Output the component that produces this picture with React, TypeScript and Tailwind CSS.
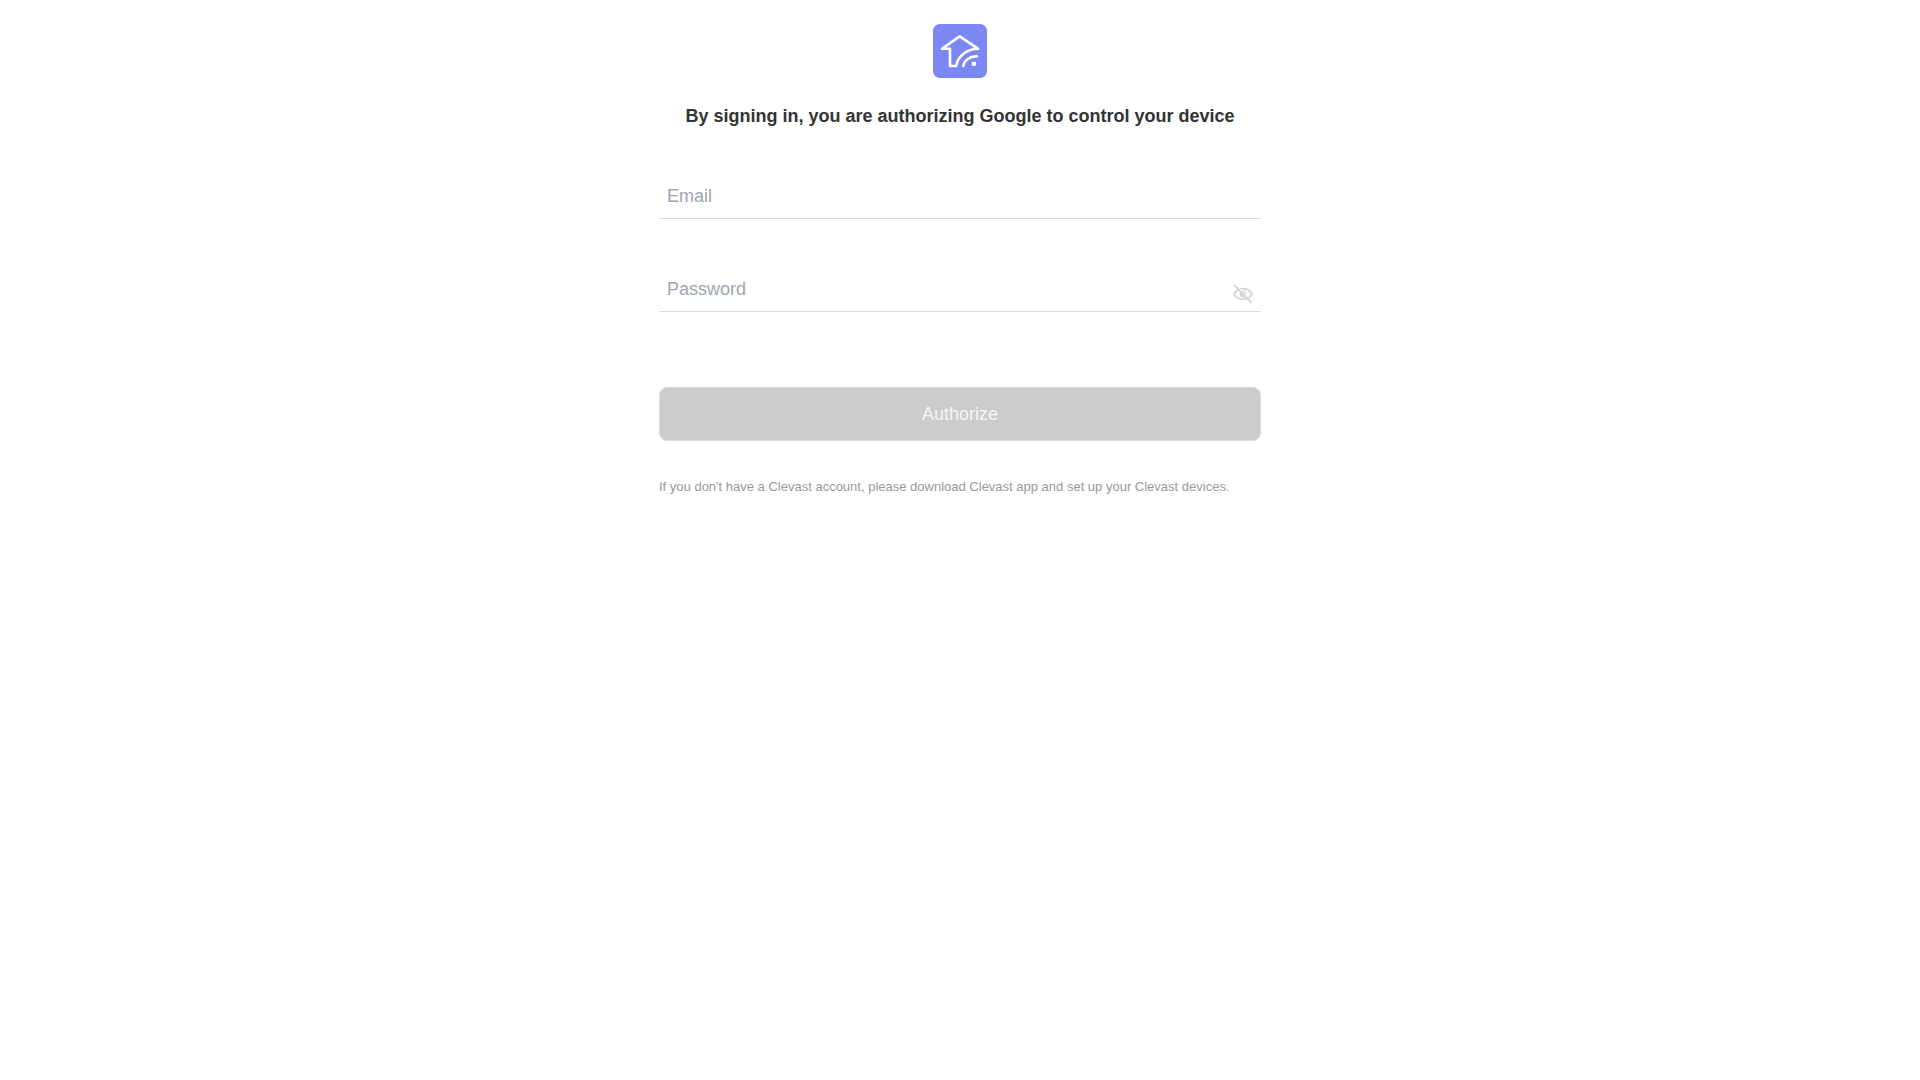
import { useState } from "react";

function Logo() {
  return (
    <svg width="54" height="54" viewBox="0 0 54 54" fill="none" className="block">
      <rect width="54" height="54" rx="7" fill="#7b87f3" />
      <g stroke="#fff" strokeWidth="2.6" strokeLinejoin="round" strokeLinecap="round">
        <path d="M45.2 24.8 26.7 12.4 9 24.8h8V42h6.2C24.3 33 33.5 24.8 45.2 24.8Z" />
        <path d="M30.3 42c.8-5.4 6.4-9.8 13.7-9.8" />
      </g>
      <rect x="38.8" y="37.8" width="4.2" height="4" fill="#fff" />
    </svg>
  );
}

function EyeOff() {
  return (
    <svg width="20" height="20" viewBox="0 0 20 20" fill="none" stroke="#d6d6d6">
      <path d="M.9 10C2.900 6.400 6.200 4.800 10 4.800s7.100 1.600 9.100 5.200c-2 3.600-5.300 5.200-9.100 5.200S2.900 13.600.9 10Z" strokeWidth="2" />
      <circle cx="10" cy="10" r="3.4" fill="#d6d6d6" stroke="none" />
      <path d="m2.700 .600 17 17" stroke="#fff" strokeWidth="1" />
      <path d="m1.200 1.200 17.600 17.600" strokeWidth="1.900" />
    </svg>
  );
}

const inputClass =
  "block h-[46px] w-full border-b border-[#dcdcdc] bg-transparent px-2 pt-0.5 text-lg leading-[21px] text-[#333] outline-none placeholder:text-[#9ca5b3]";

export default function App() {
  const [email, setEmail] = useState("");
  const [password, setPassword] = useState("");
  const [visible, setVisible] = useState(false);

  return (
    <main className="min-h-screen bg-white font-['Liberation_Sans',Arial,sans-serif]">
      <form className="mx-auto flex w-[602px] flex-col pt-6" onSubmit={(e) => e.preventDefault()}>
        <div className="flex justify-center">
          <Logo />
        </div>
        <h1 className="mt-6 text-center text-lg font-bold text-[#333]">
          By signing in, you are authorizing Google to control your device
        </h1>

        <div className="mt-[43px]">
          <input
            className={inputClass}
            placeholder="Email"
            value={email}
            onChange={(e) => setEmail(e.target.value)}
          />
        </div>
        <div className="relative mt-[47px]">
          <input
            className={inputClass}
            type={visible ? "text" : "password"}
            placeholder="Password"
            value={password}
            onChange={(e) => setPassword(e.target.value)}
          />
          <button
            type="button"
            aria-label="Show password"
            onClick={() => setVisible(!visible)}
            className="absolute top-[18px] right-2"
          >
            <EyeOff />
          </button>
        </div>

        <button
          type="submit"
          disabled={!email || !password}
          className="mt-[75px] h-[54px] rounded-lg border border-[#dcdcdc] bg-[#ccc] text-lg text-[#f5f5f5]"
        >
          Authorize
        </button>
        <p className="mt-9 text-[13px] leading-5 text-[#999]">
          If you don't have a Clevast account, please download Clevast app and set up your Clevast devices.
        </p>
      </form>
    </main>
  );
}
